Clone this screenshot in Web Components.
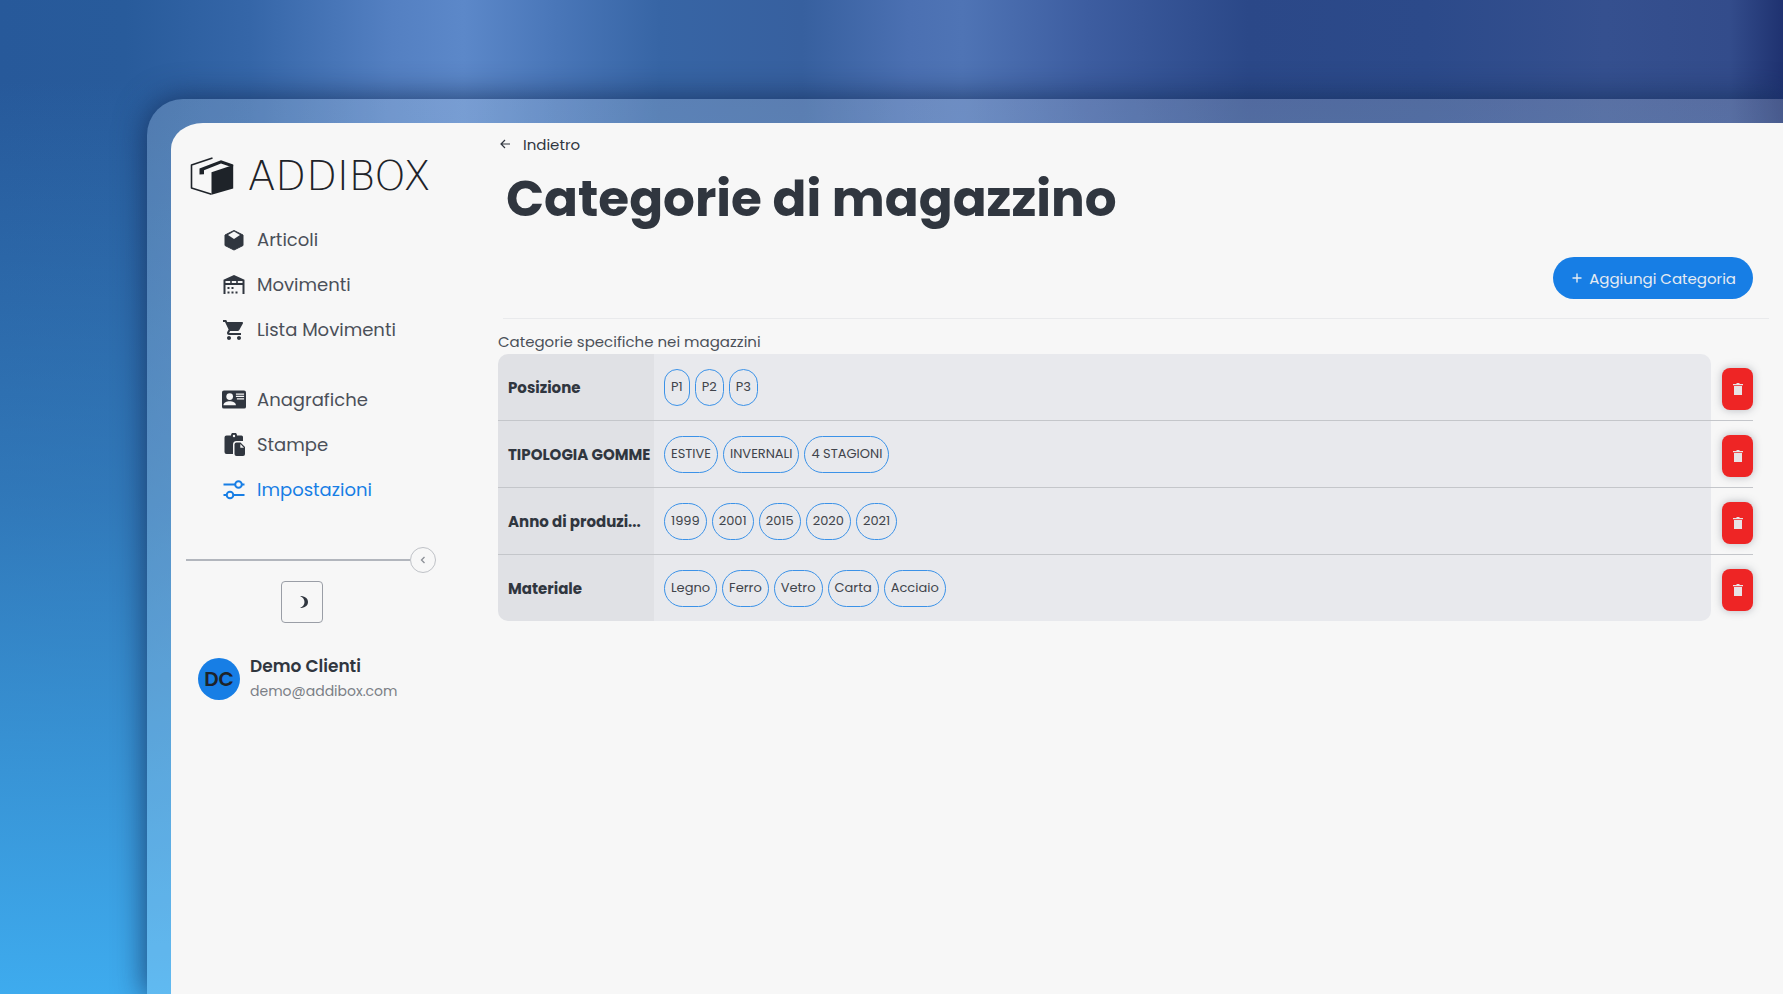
<!DOCTYPE html>
<html lang="it">
<head>
  <meta charset="UTF-8">
  <meta name="viewport" content="width=device-width, initial-scale=1">
  <title>Addibox - Categorie di magazzino</title>
  <style>
    body {
      margin: 0;
      font-family: Poppins, Inter, "Open Sans", sans-serif;
      color: #30363f;
    }
  </style>
</head>
<body>
  <app-shell>
    <side-bar slot="sidebar">
      <nav-item icon="box">Articoli</nav-item>
      <nav-item icon="warehouse">Movimenti</nav-item>
      <nav-item icon="cart">Lista Movimenti</nav-item>
      <nav-item slot="secondary" icon="contact">Anagrafiche</nav-item>
      <nav-item slot="secondary" icon="paste">Stampe</nav-item>
      <nav-item slot="secondary" icon="sliders" active>Impostazioni</nav-item>
      <user-card slot="user" initials="DC" name="Demo Clienti" email="demo@addibox.com"></user-card>
    </side-bar>
    <page-header>
      <span slot="back">Indietro</span>
      <span slot="title">Categorie di magazzino</span>
      <span slot="action">Aggiungi Categoria</span>
    </page-header>
    <category-table></category-table>
  </app-shell>

  <script>
    const ICONS = {
      box: `<svg viewBox="0 0 24 24" width="24" height="24">
          <path fill="currentColor" stroke="currentColor" stroke-linejoin="round" d="M12 2.500 21 7v10.500L12 22l-9-4.500V7z"/>
          <path fill="#f7f7f7" d="M12 3.600 18 7l-6 4-6-4z"/>
        </svg>`,
      warehouse: `<svg viewBox="0 0 24 24" width="24" height="24" fill="currentColor">
          <path d="M12 2 1.500 6.800V21h2v-9h17v9h2V6.800z"/>
          <path fill="#f7f7f7" d="M3.500 8h4.700v2H3.500zM9.800 8h4.400v2H9.800zM15.800 8h4.700v2h-4.700z"/>
          <path d="M5.500 14h2v2h-2zM9.500 14h2v2h-2zM5.500 18.500h2v2h-2zM9.500 18.500h2v2h-2zM13.500 18.500h2v2h-2z"/>
        </svg>`,
      cart: `<svg viewBox="0 0 24 24" width="24" height="24" fill="currentColor">
          <path d="M7 18c-1.100 0-1.990.9-1.990 2S5.900 22 7 22s2-.9 2-2-.9-2-2-2zM1 2v2h2l3.600 7.590-1.350 2.450c-.16.28-.25.61-.25.96 0 1.100.9 2 2 2h12v-2H7.420c-.14 0-.25-.11-.25-.25l.03-.12.9-1.630h7.450c.75 0 1.410-.41 1.750-1.030l3.580-6.490c.08-.14.12-.31.12-.48 0-.55-.45-1-1-1H5.210l-.94-2H1zm16 16c-1.100 0-1.990.9-1.990 2s.89 2 1.990 2 2-.9 2-2-.9-2-2-2z"/>
        </svg>`,
      contact: `<svg viewBox="0 0 25 19" width="25" height="19">
          <rect width="25" height="19" rx="2" fill="currentColor"/>
          <g fill="#f7f7f7">
            <circle cx="8" cy="6.500" r="3.500"/>
            <path d="M1.500 15.500c0-3 3.500-4.200 6.500-4.200s6.500 1.200 6.500 4.200z"/>
            <path d="M14.500 3.200H23v1.300h-8.500zM14.500 5.700H23V7h-8.500zM15.500 8.200H23v1.300h-7.500z"/>
          </g>
        </svg>`,
      paste: `<svg viewBox="0 0 24 24" width="24" height="24">
          <path fill="currentColor" d="M4.500 2.500H9a3 3 0 0 1 6 0h4.500A1.500 1.500 0 0 1 21 4v4h-6.500A3.500 3.500 0 0 0 11 11.500V21H4.500a2 2 0 0 1-2-2V4.500a2 2 0 0 1 2-2z"/>
          <circle cx="12" cy="3" r="1.200" fill="#f7f7f7"/>
          <path fill="currentColor" d="M14.500 9.500h4l4.500 4.500v7a2 2 0 0 1-2 2h-6.500a2 2 0 0 1-2-2v-9.500a2 2 0 0 1 2-2z"/>
          <path fill="#f7f7f7" d="M18.300 11v3.700H22z"/>
        </svg>`,
      sliders: `<svg viewBox="0 0 24 24" width="24" height="24" fill="none" stroke="currentColor" stroke-width="2">
          <path d="M1.500 6.500H13M20 6.500h2.500M1.500 17H5M11.500 17h11"/>
          <circle cx="16.500" cy="6.500" r="3.300"/>
          <circle cx="8" cy="17" r="3.300"/>
        </svg>`,
      arrow: `<svg viewBox="0 0 12 12" width="12" height="12" fill="none" stroke="currentColor" stroke-width="1.200">
          <path d="M11 6H2M6 2 2 6l4 4"/>
        </svg>`,
      plus: `<svg viewBox="0 0 10 10" width="10" height="10" fill="none" stroke="currentColor" stroke-width="1.400">
          <path d="M5 .5v9M.5 5h9"/>
        </svg>`,
      chevron: `<svg viewBox="0 0 8 8" width="8" height="8" fill="none" stroke="currentColor" stroke-width="1.300">
          <path d="M5.500 1 2.500 4l3 3"/>
        </svg>`,
      moon: `<svg viewBox="0 0 12 14" width="12" height="14">
          <path fill="currentColor" d="M4 1c5 0 8 2.500 8 6s-3 6-8 6c2.500-1 4.500-3.200 4.500-6S6.500 2 4 1z"/>
        </svg>`,
      trash: `<svg viewBox="0 0 10 12" width="10" height="12" fill="currentColor">
          <path d="M3.500 0h3v1H10v1.200H0V1h3.500zM1 3h8v9H1z"/>
        </svg>`,
    };

    const CATEGORIES = [
      { name: 'Posizione', values: ['P1', 'P2', 'P3'] },
      { name: 'TIPOLOGIA GOMME', values: ['ESTIVE', 'INVERNALI', '4 STAGIONI'] },
      { name: 'Anno di produzi...', values: ['1999', '2001', '2015', '2020', '2021'] },
      { name: 'Materiale', values: ['Legno', 'Ferro', 'Vetro', 'Carta', 'Acciaio'] },
    ];

    class UiIcon extends HTMLElement {
      constructor() {
        super();
        this.attachShadow({ mode: 'open' });
      }

      connectedCallback() {
        this.shadowRoot.innerHTML = `
          <style>
            :host {
              display: inline-flex;
              flex: none;
              align-items: center;
              justify-content: center;
            }

            svg {
              display: block;
            }
          </style>
          ${ICONS[this.getAttribute('name')]}
        `;
      }
    }

    class AppShell extends HTMLElement {
      constructor() {
        super();
        this.attachShadow({ mode: 'open' });
        this.shadowRoot.innerHTML = `
          <style>
            :host {
              display: flex;
              box-sizing: border-box;
              min-height: 100vh;
              padding: 99px 0 0 147px;
              overflow: hidden;
              background:
                linear-gradient(180deg, rgba(62, 171, 238, 0) 8%, rgba(58, 150, 215, 0.5) 50%, #3eabee 100%),
                linear-gradient(90deg, #27599a 0%, #285b9b 7%, #3566a8 14%, #5480c2 22%, #5c88c9 26%, #4a77b9 31%, #3765a5 37%, #37609f 45%, #4b70b2 51%, #4f74b5 54%, #3d5da0 61%, #2b4888 70%, #2c4a8a 80%, #35508f 90%, #334c8b 97%, #1f3270 100%);
            }

            .frame {
              display: flex;
              flex: 1;
              min-width: 0;
              padding: 24px 0 0 24px;
              border-radius: 36px 0 0 0;
              background: rgba(255, 255, 255, 0.18);
              box-shadow: 0 0 30px 2px rgba(18, 42, 84, 0.75);
            }

            .screen {
              display: flex;
              flex: 1;
              min-width: 0;
              border-radius: 32px 0 0 0 / 26px 0 0 0;
              background: #f7f7f7;
            }

            main {
              flex: 1;
              min-width: 0;
              padding: 9px 30px 40px 0;
            }
          </style>
          <div class="frame">
            <div class="screen">
              <slot name="sidebar"></slot>
              <main><slot></slot></main>
            </div>
          </div>
        `;
      }
    }

    class BrandLogo extends HTMLElement {
      constructor() {
        super();
        this.attachShadow({ mode: 'open' });
        this.shadowRoot.innerHTML = `
          <style>
            :host {
              display: flex;
              align-items: center;
              gap: 14px;
              height: 38px;
              color: #1e2329;
              font: 200 40px/38px "DejaVu Sans", sans-serif;
            }

            svg {
              flex: none;
            }
          </style>
          <svg viewBox="0 0 44 38" width="44" height="38" aria-hidden="true">
            <path fill="none" stroke="currentColor" stroke-width="1.600" stroke-linejoin="round" d="M22.500 1 1.500 8v23l20 6.200"/>
            <path fill="currentColor" d="M21.500 15.200 43.200 8v23.500l-21.700 6.300z"/>
            <path fill="currentColor" d="M9.500 17.500v-6L31 3.200l12.200 4.300v1.800H39l-8-2.800-17 6.700v4z"/>
          </svg>
          <span>ADDIBOX</span>
        `;
      }
    }

    class NavItem extends HTMLElement {
      constructor() {
        super();
        this.attachShadow({ mode: 'open' });
      }

      connectedCallback() {
        this.shadowRoot.innerHTML = `
          <style>
            :host {
              display: block;
            }

            a {
              display: flex;
              align-items: center;
              gap: 11px;
              height: 45px;
              color: #4b5059;
              font-size: 18px;
              text-decoration: none;
            }

            ui-icon {
              width: 24px;
              color: #30363f;
            }

            :host([active]) a,
            :host([active]) ui-icon {
              color: #177ee5;
            }
          </style>
          <a href="#"><ui-icon name="${this.getAttribute('icon')}"></ui-icon><slot></slot></a>
        `;
      }
    }

    class UserCard extends HTMLElement {
      constructor() {
        super();
        this.attachShadow({ mode: 'open' });
      }

      connectedCallback() {
        this.shadowRoot.innerHTML = `
          <style>
            :host {
              display: flex;
              align-items: center;
              gap: 10px;
            }

            .avatar {
              display: flex;
              align-items: center;
              justify-content: center;
              width: 42px;
              height: 42px;
              border-radius: 50%;
              background: #177ee5;
              color: #1e2329;
              font-size: 20px;
              font-weight: 600;
            }

            .name {
              font-size: 17px;
              line-height: 25px;
              font-weight: 600;
            }

            .email {
              color: #7b7f86;
              font-size: 14px;
              line-height: 25px;
            }
          </style>
          <div class="avatar">${this.getAttribute('initials')}</div>
          <div>
            <div class="name">${this.getAttribute('name')}</div>
            <div class="email">${this.getAttribute('email')}</div>
          </div>
        `;
      }
    }

    class SideBar extends HTMLElement {
      constructor() {
        super();
        this.attachShadow({ mode: 'open' });
        this.shadowRoot.innerHTML = `
          <style>
            :host {
              display: block;
              flex: none;
              box-sizing: border-box;
              width: 327px;
              padding: 34px 62px 40px 15px;
            }

            brand-logo {
              margin-left: 4px;
            }

            nav {
              margin-left: 36px;
            }

            .primary {
              margin-top: 22px;
            }

            .secondary {
              margin-top: 25px;
            }

            .collapse {
              display: flex;
              align-items: center;
              margin-top: 35px;
            }

            .collapse hr {
              flex: 1;
              margin: 0;
              border: 0;
              border-top: 2px solid #b2b6bd;
            }

            button {
              display: flex;
              align-items: center;
              justify-content: center;
              box-sizing: border-box;
              padding: 0;
              background: none;
              cursor: pointer;
            }

            .toggle {
              width: 26px;
              height: 26px;
              border: 1px solid #bfc2c7;
              border-radius: 50%;
              color: #8b8f96;
            }

            .theme {
              width: 42px;
              height: 42px;
              margin: 8px 0 0 95px;
              border: 1px solid #9a9ea6;
              border-radius: 4px;
              color: #30363f;
            }

            .user {
              margin: 31px 0 0 12px;
            }
          </style>
          <brand-logo></brand-logo>
          <nav class="primary"><slot></slot></nav>
          <nav class="secondary"><slot name="secondary"></slot></nav>
          <div class="collapse">
            <hr>
            <button class="toggle" aria-label="Comprimi menu"><ui-icon name="chevron"></ui-icon></button>
          </div>
          <button class="theme" aria-label="Tema scuro"><ui-icon name="moon"></ui-icon></button>
          <div class="user"><slot name="user"></slot></div>
        `;
      }
    }

    class PageHeader extends HTMLElement {
      constructor() {
        super();
        this.attachShadow({ mode: 'open' });
        this.shadowRoot.innerHTML = `
          <style>
            :host {
              display: block;
            }

            .back {
              display: flex;
              align-items: center;
              gap: 12px;
              width: max-content;
              height: 24px;
              padding-left: 1px;
              color: #30363f;
              font-size: 15px;
              text-decoration: none;
            }

            h1 {
              margin: 13px 0 0 8px;
              font-size: 50px;
              line-height: 60px;
              font-weight: 700;
            }

            .toolbar {
              display: flex;
              justify-content: flex-end;
              margin-top: 28px;
            }

            button {
              display: flex;
              align-items: center;
              gap: 7px;
              height: 42px;
              padding: 0 17px 0 19px;
              border: 0;
              border-radius: 21px;
              background: #177ee5;
              color: #e6ebf2;
              font: inherit;
              font-size: 15px;
              cursor: pointer;
            }

            hr {
              margin: 19px -16px 0 5px;
              border: 0;
              border-top: 1px solid #e9eaec;
            }
          </style>
          <a class="back" href="#"><ui-icon name="arrow"></ui-icon><slot name="back"></slot></a>
          <h1><slot name="title"></slot></h1>
          <div class="toolbar">
            <button><ui-icon name="plus"></ui-icon><slot name="action"></slot></button>
          </div>
          <hr>
        `;
      }
    }

    class TagChip extends HTMLElement {
      constructor() {
        super();
        this.attachShadow({ mode: 'open' });
        this.shadowRoot.innerHTML = `
          <style>
            :host {
              display: inline-flex;
              align-items: center;
              box-sizing: border-box;
              height: 37px;
              padding: 0 6px;
              border: 1px solid #3b92e8;
              border-radius: 19px;
              color: #40444b;
              font-size: 13px;
              white-space: nowrap;
            }
          </style>
          <slot></slot>
        `;
      }
    }

    class CategoryTable extends HTMLElement {
      constructor() {
        super();
        this.attachShadow({ mode: 'open' });
      }

      connectedCallback() {
        this.render();
      }

      render() {
        const rows = CATEGORIES.map((category) => `
          <tr>
            <th scope="row">${category.name}</th>
            <td class="values">
              <div class="chips">${category.values.map((value) => `<tag-chip>${value}</tag-chip>`).join('')}</div>
            </td>
            <td class="actions">
              <button aria-label="Elimina ${category.name}"><ui-icon name="trash"></ui-icon></button>
            </td>
          </tr>
        `).join('');

        this.shadowRoot.innerHTML = `
          <style>
            :host {
              display: block;
              margin-top: 10px;
            }

            table {
              width: 100%;
              table-layout: fixed;
              border-collapse: separate;
              border-spacing: 0;
            }

            caption {
              color: #4b5059;
              font-size: 15px;
              line-height: 25px;
              text-align: left;
            }

            .name-col {
              width: 156px;
            }

            .actions-col {
              width: 42px;
            }

            th,
            td {
              height: 66px;
              padding: 0;
              border-bottom: 1px solid #c4c6ca;
            }

            th {
              padding-left: 10px;
              background: #e0e1e5;
              font-size: 15px;
              font-weight: 700;
              text-align: left;
              white-space: nowrap;
            }

            .values {
              padding-left: 10px;
              background: #e8e9ed;
            }

            .actions {
              padding-top: 4px;
              height: 62px;
            }

            .chips {
              display: flex;
              gap: 5px;
            }

            tr:first-child th {
              border-top-left-radius: 10px;
            }

            tr:first-child .values {
              border-top-right-radius: 10px;
            }

            tr:last-child th {
              border-bottom-left-radius: 10px;
            }

            tr:last-child .values {
              border-bottom-right-radius: 10px;
            }

            tr:last-child > * {
              border-bottom: 0;
            }

            button {
              display: flex;
              align-items: center;
              justify-content: center;
              width: 31px;
              height: 42px;
              margin-left: auto;
              padding: 0;
              border: 0;
              border-radius: 8px;
              background: #ee2525;
              box-shadow: 0 0 8px rgba(60, 70, 85, 0.35);
              color: #e8e4e6;
              cursor: pointer;
            }
          </style>
          <table>
            <caption>Categorie specifiche nei magazzini</caption>
            <colgroup><col class="name-col"><col><col class="actions-col"></colgroup>
            <tbody>${rows}</tbody>
          </table>
        `;
      }
    }

    customElements.define('ui-icon', UiIcon);
    customElements.define('app-shell', AppShell);
    customElements.define('brand-logo', BrandLogo);
    customElements.define('nav-item', NavItem);
    customElements.define('user-card', UserCard);
    customElements.define('side-bar', SideBar);
    customElements.define('page-header', PageHeader);
    customElements.define('tag-chip', TagChip);
    customElements.define('category-table', CategoryTable);
  </script>
</body>
</html>
